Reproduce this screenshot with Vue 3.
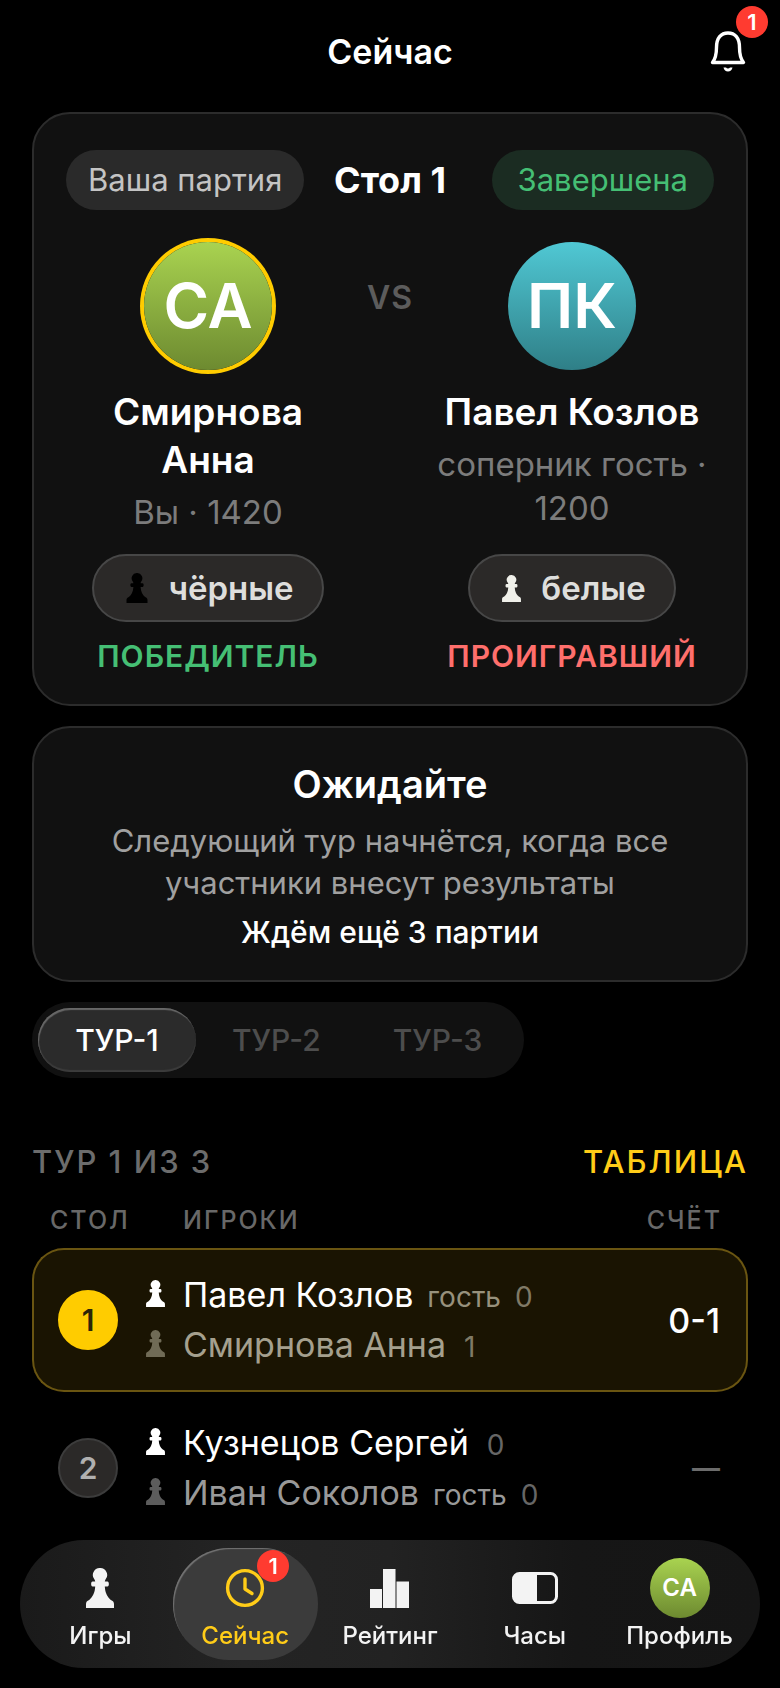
<template>
  <div class="screen">
    <header class="topbar">
      <h1>Сейчас</h1>
      <button class="bell" type="button" aria-label="Уведомления">
        <svg viewBox="0 0 36 42" width="36" height="42" fill="none">
          <path
            d="M2.5 31.5C6 27 6.5 23 6.5 16.5 6.5 7 11 2 18 2s11.500 5 11.500 14.500c0 6.500.5 10.500 4 15z"
            stroke="#fff"
            stroke-width="3.400"
            stroke-linejoin="round"
          />
          <path d="M13.500 36.500h2.500c.8 1.200 3.200 1.200 4 0h2.500c-.5 2.600-2.300 4-4.500 4s-4-1.400-4.500-4z" fill="#fff" />
        </svg>
        <span class="badge">1</span>
      </button>
    </header>

    <main>
      <section class="card match">
        <div class="match-head">
          <span class="pill">Ваша партия</span>
          <h2>Стол 1</h2>
          <span class="pill pill-done">Завершена</span>
        </div>
        <div class="versus">
          <div v-for="(p, i) in players" :key="p.name" class="player" :class="'player-' + (i + 1)">
            <div class="avatar" :class="p.avatar">{{ p.initials }}</div>
            <div class="player-name">{{ p.name }}</div>
            <div class="player-info">{{ p.info }}</div>
            <div class="chip">
              <svg class="pawn" :class="p.pawn" viewBox="0 0 28 40">
                <path :d="pawnPath" />
              </svg>
              {{ p.color }}
            </div>
            <div class="result" :class="p.outcome">{{ p.result }}</div>
          </div>
          <div class="vs">VS</div>
        </div>
      </section>

      <section class="card waiting">
        <h2>Ожидайте</h2>
        <p>Следующий тур начнётся, когда все участники внесут результаты</p>
        <strong>Ждём ещё 3 партии</strong>
      </section>

      <div class="tabs" role="tablist">
        <button
          v-for="n in 3"
          :key="n"
          type="button"
          role="tab"
          class="tab"
          :class="{ active: tour === n }"
          :aria-selected="tour === n"
          @click="tour = n"
        >
          ТУР-{{ n }}
        </button>
      </div>

      <div class="section-head">
        <h3>ТУР {{ tour }} ИЗ 3</h3>
        <a href="#table">ТАБЛИЦА</a>
      </div>

      <table id="table" class="boards">
        <thead>
          <tr>
            <th class="col-board">СТОЛ</th>
            <th class="col-players">ИГРОКИ</th>
            <th class="col-score">СЧЁТ</th>
          </tr>
        </thead>
        <tbody>
          <tr v-for="b in boards" :key="b.number" :class="{ mine: b.mine }">
            <td class="col-board"><span class="board-number">{{ b.number }}</span></td>
            <td>
              <div v-for="(p, i) in b.players" :key="p.name" class="line" :class="{ black: i === 1 }">
                <svg class="pawn" viewBox="0 0 28 40"><path :d="pawnPath" /></svg>
                <span class="line-name">{{ p.name }}</span>
                <span v-if="p.guest" class="guest">гость</span>
                <span class="points">{{ p.points }}</span>
              </div>
            </td>
            <td class="col-score" :class="{ pending: !b.score }">{{ b.score || '—' }}</td>
          </tr>
        </tbody>
      </table>
    </main>

    <nav class="bottom-nav">
      <a
        v-for="item in nav"
        :key="item.id"
        :href="'#' + item.id"
        class="nav-item"
        :class="{ active: page === item.id }"
        @click.prevent="page = item.id"
      >
        <span class="nav-icon">
          <svg v-if="item.id === 'games'" viewBox="0 0 28 40" width="28" height="40" fill="currentColor">
            <path :d="pawnPath" />
          </svg>
          <svg
            v-else-if="item.id === 'now'"
            viewBox="0 0 40 40"
            width="40"
            height="40"
            fill="none"
            stroke="currentColor"
            stroke-width="3.400"
          >
            <circle cx="20" cy="20" r="17.400" />
            <path d="M20 11v10l7 4.500" stroke-linecap="round" stroke-linejoin="round" />
          </svg>
          <svg v-else-if="item.id === 'rating'" viewBox="0 0 39 39" width="39" height="39" fill="currentColor">
            <path d="M0 20h12v19H0zM13 0h12.500v39H13zM26.500 12.500H39V39H26.500z" />
          </svg>
          <svg v-else-if="item.id === 'clock'" viewBox="0 0 46 32" width="46" height="32" fill="none">
            <rect x="1.500" y="1.500" width="43" height="29" rx="6" stroke="currentColor" stroke-width="3" />
            <path d="M7 1h18v30H7c-3.300 0-6-2.700-6-6V7c0-3.300 2.700-6 6-6z" fill="currentColor" />
          </svg>
          <span v-else class="avatar small green">СА</span>
          <span v-if="item.count" class="badge">{{ item.count }}</span>
        </span>
        <span class="nav-label">{{ item.label }}</span>
      </a>
    </nav>
  </div>
</template>

<script setup>
import { ref } from 'vue';

const tour = ref(1);
const page = ref('now');

const pawnPath =
  'M14 0a7 7 0 0 1 5.500 11.500c-.5.800-.8 1.500-.6 2h2.600c1.800 0 1.800 5 0 5h-2.700c.3 6.500 2.600 10.500 6 13.500 2.200.8 3.200 2 3.200 4v4H0v-4c0-2 1-3.200 3.200-4 3.400-3 5.700-7 6-13.500H6.500c-1.800 0-1.800-5 0-5h2.600c.2-.5-.1-1.200-.6-2A7 7 0 0 1 14 0z';

const players = [
  {
    initials: 'СА',
    name: 'Смирнова Анна',
    info: 'Вы · 1420',
    color: 'чёрные',
    pawn: 'pawn-black',
    avatar: 'green own',
    result: 'ПОБЕДИТЕЛЬ',
    outcome: 'win'
  },
  {
    initials: 'ПК',
    name: 'Павел Козлов',
    info: 'соперник гость · 1200',
    color: 'белые',
    pawn: 'pawn-white',
    avatar: 'teal',
    result: 'ПРОИГРАВШИЙ',
    outcome: 'loss'
  }
];

const boards = [
  {
    number: 1,
    mine: true,
    score: '0-1',
    players: [
      { name: 'Павел Козлов', guest: true, points: 0 },
      { name: 'Смирнова Анна', points: 1 }
    ]
  },
  {
    number: 2,
    players: [
      { name: 'Кузнецов Сергей', points: 0 },
      { name: 'Иван Соколов', guest: true, points: 0 }
    ]
  }
];

const nav = [
  { id: 'games', label: 'Игры' },
  { id: 'now', label: 'Сейчас', count: 1 },
  { id: 'rating', label: 'Рейтинг' },
  { id: 'clock', label: 'Часы' },
  { id: 'profile', label: 'Профиль' }
];
</script>

<style>
body {
  background: #000;
}
</style>

<style scoped>
.screen {
  font-family: Inter, "Noto Sans", sans-serif;
  color: #fff;
  padding: 0 32px 140px;
}

h1, h2, h3, p { margin: 0; }

button {
  font-family: inherit;
  border: none;
  background: none;
  padding: 0;
  cursor: pointer;
}

a { text-decoration: none; }

/* Header */
.topbar {
  display: grid;
  grid-template-columns: 1fr auto 1fr;
  align-items: center;
  padding: 30px 0 38px;
}

.topbar h1 {
  grid-column: 2;
  font-size: 34px;
  line-height: 44px;
  font-weight: 600;
}

.bell {
  justify-self: end;
  position: relative;
  width: 38px;
  height: 44px;
}

.bell svg { display: block; }

.badge {
  position: absolute;
  top: -24px;
  right: -20px;
  width: 32px;
  height: 32px;
  border-radius: 50%;
  background: #ff3b30;
  color: #fff;
  font-size: 22px;
  line-height: 32px;
  font-weight: 600;
  text-align: center;
}

/* Cards */
.card {
  background: #111;
  border: 2px solid #2c2c2c;
  border-radius: 38px;
}

.match { padding: 36px 32px 30px; }

.match-head {
  display: grid;
  grid-template-columns: 1fr auto 1fr;
  align-items: center;
}

.match-head h2 {
  font-size: 36px;
  line-height: 48px;
  font-weight: 700;
}

.pill {
  justify-self: start;
  padding: 0 22px;
  border-radius: 30px;
  background: #2a2a2a;
  color: #c4c4c4;
  font-size: 31px;
  line-height: 60px;
  white-space: nowrap;
}

.pill-done {
  justify-self: end;
  padding: 0 26px;
  background: #1b2c22;
  color: #45bf74;
}

.versus {
  display: grid;
  grid-template-columns: 1fr 80px 1fr;
  margin-top: 32px;
}

.player {
  display: flex;
  flex-direction: column;
  align-items: center;
  padding: 0 4px;
  text-align: center;
}

.player-1 { order: 1; }
.vs { order: 2; }
.player-2 { order: 3; }

.vs {
  padding-top: 36px;
  font-size: 32px;
  line-height: 40px;
  font-weight: 600;
  letter-spacing: 1px;
  text-align: center;
  color: #5c5c5c;
}

.avatar {
  width: 128px;
  height: 128px;
  border-radius: 50%;
  font-size: 62px;
  line-height: 128px;
  font-weight: 600;
  text-align: center;
  color: #fff;
}

.green { background: linear-gradient(#a9d350, #6d8a30); }
.teal { background: linear-gradient(#50c8d4, #2f7f87); }
.own { box-shadow: 0 0 0 4px #ffcc00; }

.player-name {
  margin-top: 18px;
  font-size: 37px;
  line-height: 48px;
  font-weight: 600;
}

.player-info {
  margin: 6px 0 20px;
  font-size: 33px;
  line-height: 44px;
  color: #7c7c7c;
}

.chip {
  display: flex;
  align-items: center;
  gap: 20px;
  margin-top: auto;
  padding: 0 28px 0 32px;
  border: 2px solid #474747;
  border-radius: 34px;
  background: #2b2928;
  color: #dededc;
  font-size: 33px;
  line-height: 64px;
  font-weight: 600;
}

.pawn {
  width: 19px;
  height: 27px;
  flex: none;
  fill: #fff;
}

.pawn-black {
  width: 22px;
  height: 30px;
  fill: #000;
}

.pawn-white {
  fill: #f0f0ea;
}

.result {
  margin-top: 16px;
  font-size: 30px;
  line-height: 36px;
  font-weight: 600;
  letter-spacing: 1px;
}

.win { color: #45bf74; }
.loss { color: #ff6f6c; }

/* Waiting */
.waiting {
  margin-top: 20px;
  padding: 32px 32px 28px;
  text-align: center;
}

.waiting h2 {
  font-size: 38px;
  line-height: 48px;
  font-weight: 600;
}

.waiting p {
  max-width: 580px;
  margin: 12px auto 8px;
  font-size: 31px;
  line-height: 42px;
  color: #a0a0a0;
}

.waiting strong {
  display: block;
  font-size: 30px;
  line-height: 40px;
  font-weight: 500;
}

/* Tabs */
.tabs {
  display: flex;
  width: fit-content;
  margin-top: 20px;
  padding: 6px;
  border-radius: 38px;
  background: #111;
}

.tab {
  min-width: 158px;
  padding: 0 36px;
  border-radius: 32px;
  color: #4d4d4d;
  font-size: 30px;
  line-height: 64px;
  font-weight: 500;
}

.tab.active {
  background: #2b2b2b;
  color: #fff;
  box-shadow: inset 1px 2px 1px #686868, inset 0 -2px 1px #3c3c3c;
}

/* Boards */
.section-head {
  display: flex;
  justify-content: space-between;
  margin: 64px 0 16px;
  font-size: 31px;
  line-height: 40px;
  letter-spacing: 2px;
}

.section-head h3 {
  font-size: inherit;
  font-weight: 500;
  color: #6c6c6c;
}

.section-head a {
  font-weight: 500;
  color: #ffcc18;
}

.boards {
  width: 100%;
  border-spacing: 0 4px;
}

th {
  padding: 0 0 6px;
  font-size: 25px;
  line-height: 36px;
  font-weight: 500;
  letter-spacing: 2px;
  text-align: left;
  color: #686868;
}

td {
  padding: 20px 0;
  border: 2px solid transparent;
  border-width: 2px 0;
}

td:first-child { border-left-width: 2px; }
td:last-child { border-right-width: 2px; }

th.col-board { padding-left: 18px; width: 94px; }
td.col-board { padding-left: 24px; width: 86px; }
.col-players { padding-left: 39px; }
.col-score { text-align: right; }
th.col-score { padding-right: 26px; }

td.col-score {
  padding-right: 26px;
  font-size: 34px;
  font-weight: 500;
}

td.pending {
  color: #6c6c6c;
  font-size: 28px;
  font-weight: 600;
}

.mine td {
  background: #1a1402;
  border-color: #6a5511;
}

.mine td:first-child { border-radius: 32px 0 0 32px; }
.mine td:last-child { border-radius: 0 32px 32px 0; }

.board-number {
  display: block;
  box-sizing: border-box;
  width: 60px;
  height: 60px;
  border: 2px solid #3c3c3c;
  border-radius: 50%;
  background: #2b2928;
  color: #b0b0b0;
  font-size: 30px;
  line-height: 56px;
  font-weight: 600;
  text-align: center;
}

.mine .board-number {
  border-color: #ffcc00;
  background: #ffcc00;
  color: #2c2507;
}

.line {
  display: flex;
  align-items: baseline;
  height: 50px;
  line-height: 50px;
}

.line .pawn {
  margin: 0 18px -2px 2px;
}

.line-name {
  font-size: 34px;
  font-weight: 400;
}

.guest, .points {
  margin-left: 14px;
  font-size: 28px;
  color: #858585;
}

.points { color: #666; }
.line-name + .points { margin-left: 18px; }

.mine .guest { color: #97917c; }
.mine .points { color: #807a66; }

.black .line-name, .black .guest { color: #999; }
.black .pawn { fill: #5c5c5c; }
.mine .black .line-name { color: #a5a08e; }
.mine .black .pawn { fill: #706b56; }

/* Bottom navigation */
.bottom-nav {
  position: fixed;
  right: 20px;
  bottom: 20px;
  left: 20px;
  display: grid;
  grid-template-columns: repeat(5, 1fr);
  padding: 8px;
  border-radius: 64px;
  background: linear-gradient(90deg, #1a1a1a, #242424 30%, #222 50%, #161616 75%, #151515);
}

.nav-item {
  display: flex;
  flex-direction: column;
  align-items: center;
  gap: 4px;
  padding: 10px 0;
  border-radius: 56px;
  color: #f3f3f3;
}

.nav-item.active {
  background: #3b3b3b;
  color: #ffcc18;
  box-shadow: inset 2px 2px 1px -1px #747474;
}

.nav-icon {
  position: relative;
  display: flex;
  align-items: center;
  justify-content: center;
  width: 60px;
  height: 60px;
}

.nav-icon .badge {
  top: -8px;
  right: -14px;
}

.nav-label {
  font-size: 24px;
  line-height: 28px;
  font-weight: 500;
}

.small {
  width: 60px;
  height: 60px;
  font-size: 24px;
  line-height: 60px;
}
</style>
